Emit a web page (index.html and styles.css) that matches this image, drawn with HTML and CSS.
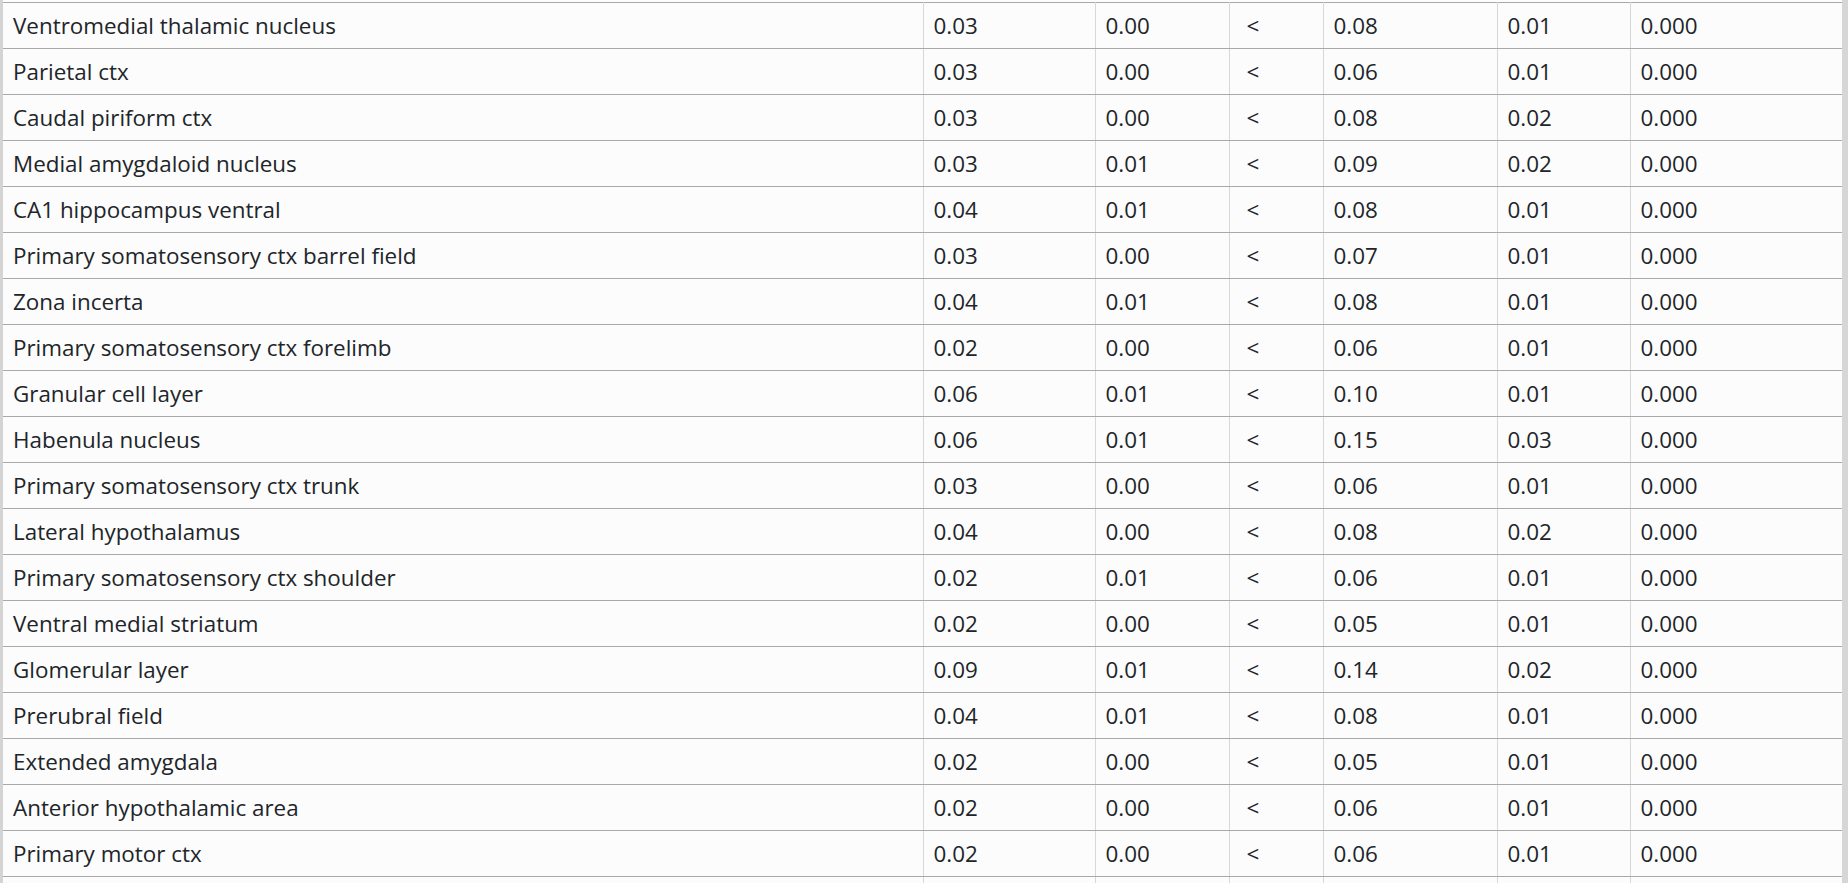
FILE: index.html
```html
<!DOCTYPE html>
<html lang="en">
<head>
<meta charset="utf-8">
<title>Regions</title>
<link rel="stylesheet" href="styles.css">
</head>
<body>
<div class="frame">
<table class="data">
<colgroup>
<col class="c-name"><col class="c-a"><col class="c-b"><col class="c-sym"><col class="c-c"><col class="c-d"><col class="c-p">
</colgroup>
<tbody>
<tr><td>Ventromedial thalamic nucleus</td><td>0.03</td><td>0.00</td><td class="sym">&lt;</td><td>0.08</td><td>0.01</td><td>0.000</td></tr>
<tr><td>Parietal ctx</td><td>0.03</td><td>0.00</td><td class="sym">&lt;</td><td>0.06</td><td>0.01</td><td>0.000</td></tr>
<tr><td>Caudal piriform ctx</td><td>0.03</td><td>0.00</td><td class="sym">&lt;</td><td>0.08</td><td>0.02</td><td>0.000</td></tr>
<tr><td>Medial amygdaloid nucleus</td><td>0.03</td><td>0.01</td><td class="sym">&lt;</td><td>0.09</td><td>0.02</td><td>0.000</td></tr>
<tr><td>CA1 hippocampus ventral</td><td>0.04</td><td>0.01</td><td class="sym">&lt;</td><td>0.08</td><td>0.01</td><td>0.000</td></tr>
<tr><td>Primary somatosensory ctx barrel field</td><td>0.03</td><td>0.00</td><td class="sym">&lt;</td><td>0.07</td><td>0.01</td><td>0.000</td></tr>
<tr><td>Zona incerta</td><td>0.04</td><td>0.01</td><td class="sym">&lt;</td><td>0.08</td><td>0.01</td><td>0.000</td></tr>
<tr><td>Primary somatosensory ctx forelimb</td><td>0.02</td><td>0.00</td><td class="sym">&lt;</td><td>0.06</td><td>0.01</td><td>0.000</td></tr>
<tr><td>Granular cell layer</td><td>0.06</td><td>0.01</td><td class="sym">&lt;</td><td>0.10</td><td>0.01</td><td>0.000</td></tr>
<tr><td>Habenula nucleus</td><td>0.06</td><td>0.01</td><td class="sym">&lt;</td><td>0.15</td><td>0.03</td><td>0.000</td></tr>
<tr><td>Primary somatosensory ctx trunk</td><td>0.03</td><td>0.00</td><td class="sym">&lt;</td><td>0.06</td><td>0.01</td><td>0.000</td></tr>
<tr><td>Lateral hypothalamus</td><td>0.04</td><td>0.00</td><td class="sym">&lt;</td><td>0.08</td><td>0.02</td><td>0.000</td></tr>
<tr><td>Primary somatosensory ctx shoulder</td><td>0.02</td><td>0.01</td><td class="sym">&lt;</td><td>0.06</td><td>0.01</td><td>0.000</td></tr>
<tr><td>Ventral medial striatum</td><td>0.02</td><td>0.00</td><td class="sym">&lt;</td><td>0.05</td><td>0.01</td><td>0.000</td></tr>
<tr><td>Glomerular layer</td><td>0.09</td><td>0.01</td><td class="sym">&lt;</td><td>0.14</td><td>0.02</td><td>0.000</td></tr>
<tr><td>Prerubral field</td><td>0.04</td><td>0.01</td><td class="sym">&lt;</td><td>0.08</td><td>0.01</td><td>0.000</td></tr>
<tr><td>Extended amygdala</td><td>0.02</td><td>0.00</td><td class="sym">&lt;</td><td>0.05</td><td>0.01</td><td>0.000</td></tr>
<tr><td>Anterior hypothalamic area</td><td>0.02</td><td>0.00</td><td class="sym">&lt;</td><td>0.06</td><td>0.01</td><td>0.000</td></tr>
<tr><td>Primary motor ctx</td><td>0.02</td><td>0.00</td><td class="sym">&lt;</td><td>0.06</td><td>0.01</td><td>0.000</td></tr>
<tr class="tail"><td></td><td></td><td></td><td></td><td></td><td></td><td></td></tr>
</tbody>
</table>
</div>
</body>
</html>
```
FILE: styles.css
```css
html, body {
  margin: 0;
  padding: 0;
  background: #fcfcfc;
  overflow: hidden;
}
.frame {
  border-left: 3px solid #d4d4d4;
  border-right: 6px solid #d6d6d6;
  padding-top: 2px;
  height: 881px;
  overflow: hidden;
  background: #fcfcfc;
}
.data {
  width: 100%;
  border-collapse: collapse;
  table-layout: fixed;
  font-family: "Open Sans", "Noto Sans", sans-serif;
  font-size: 22.4px;
  color: #212529;
}
.c-name { width: 920px; }
.c-a { width: 172px; }
.c-b { width: 134px; }
.c-sym { width: 94px; }
.c-c { width: 174px; }
.c-d { width: 133px; }
.data td {
  height: 46px;
  box-sizing: border-box;
  padding: 0 10px;
  border-top: 1px solid #a9a9a9;
  border-bottom: 1px solid #a9a9a9;
  border-left: 1px solid #d8d8d8;
  border-right: 1px solid #d8d8d8;
  vertical-align: middle;
  white-space: nowrap;
  line-height: 28px;
}
.data td:first-child { border-left: none; }
.data td:last-child { border-right: none; }
.data td.sym { padding-left: 17px; }
```
